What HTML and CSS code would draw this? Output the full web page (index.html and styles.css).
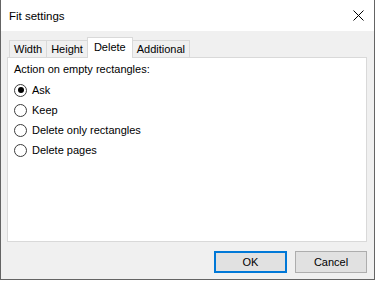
FILE: index.html
```html
<!DOCTYPE html>
<html lang="en">
<head>
    <meta charset="UTF-8">
    <title>Fit settings</title>
    <link rel="stylesheet" href="styles.css">
</head>
<body>
    <div class="window">
        <div class="titlebar">
            <span class="title">Fit settings</span>
            <svg class="close" width="11" height="11" viewBox="0 0 11 11">
                <path d="M0.5 0.5 L10.5 10.5 M10.5 0.5 L0.5 10.5" stroke="#000" stroke-width="1" fill="none"/>
            </svg>
        </div>

        <div class="client">
            <div class="tabs">
                <div class="tab">Width</div>
                <div class="tab">Height</div>
                <div class="tab selected">Delete</div>
                <div class="tab">Additional</div>
            </div>

            <div class="panel">
                <div class="group-label">Action on empty rectangles:</div>
                <label class="radio"><span class="dot checked"></span>Ask</label>
                <label class="radio"><span class="dot"></span>Keep</label>
                <label class="radio"><span class="dot"></span>Delete only rectangles</label>
                <label class="radio"><span class="dot"></span>Delete pages</label>
            </div>

            <div class="buttons">
                <button class="btn default">OK</button>
                <button class="btn cancel">Cancel</button>
            </div>
        </div>
    </div>
</body>
</html>
```

FILE: styles.css
```css
* {
    box-sizing: border-box;
}
html, body {
    margin: 0;
    padding: 0;
    background: #ffffff;
}
body {
    font-family: "Liberation Sans", Arial, sans-serif;
    font-size: 11px;
    color: #000;
}
.window {
    width: 375px;
    height: 280px;
    display: flex;
    flex-direction: column;
    border-left: 1px solid #646464;
    border-right: 1px solid #646464;
    border-bottom: 1px solid #646464;
    background: #f0f0f0;
}
.titlebar {
    height: 31px;
    background: #ffffff;
    display: flex;
    align-items: center;
    justify-content: space-between;
    padding: 0 10px 0 8px;
}
.title {
    font-size: 11.5px;
}
.close {
    display: block;
    margin-top: -1px;
}
.client {
    flex: 1;
    display: flex;
    flex-direction: column;
    padding: 6px 7px 0 6px;
}
.tabs {
    display: flex;
    align-items: flex-end;
    height: 20px;
    padding-left: 2px;
    position: relative;
    z-index: 1;
}
.tab {
    height: 17px;
    line-height: 16px;
    padding: 0 4px;
    background: #f0f0f0;
    border: 1px solid #d9d9d9;
    border-bottom: none;
    margin-right: -1px;
}
.tab.selected {
    height: 21px;
    line-height: 18px;
    background: #ffffff;
    margin-bottom: -1px;
    padding: 0 6px;
}
.panel {
    height: 185px;
    background: #ffffff;
    border: 1px solid #d9d9d9;
    padding: 4px 7px 0 6px;
}
.group-label {
    line-height: 14px;
    margin-bottom: 4px;
}
.radio {
    display: flex;
    align-items: center;
    height: 20px;
}
.dot {
    width: 13px;
    height: 13px;
    border: 1px solid #3c3c3c;
    border-radius: 50%;
    background: #ffffff;
    margin-right: 5px;
    display: flex;
    align-items: center;
    justify-content: center;
}
.dot.checked::after {
    content: "";
    width: 6px;
    height: 6px;
    border-radius: 50%;
    background: #000000;
}
.buttons {
    display: flex;
    justify-content: flex-end;
    gap: 8px;
    margin-top: 9px;
}
.btn {
    font-family: "Liberation Sans", Arial, sans-serif;
    font-size: 11px;
    height: 22px;
    background: #e1e1e1;
    border: 1px solid #adadad;
    padding: 0;
    color: #000;
}
.btn.default {
    width: 73px;
    border: 2px solid #0078d7;
}
.btn.cancel {
    width: 72px;
}
```
